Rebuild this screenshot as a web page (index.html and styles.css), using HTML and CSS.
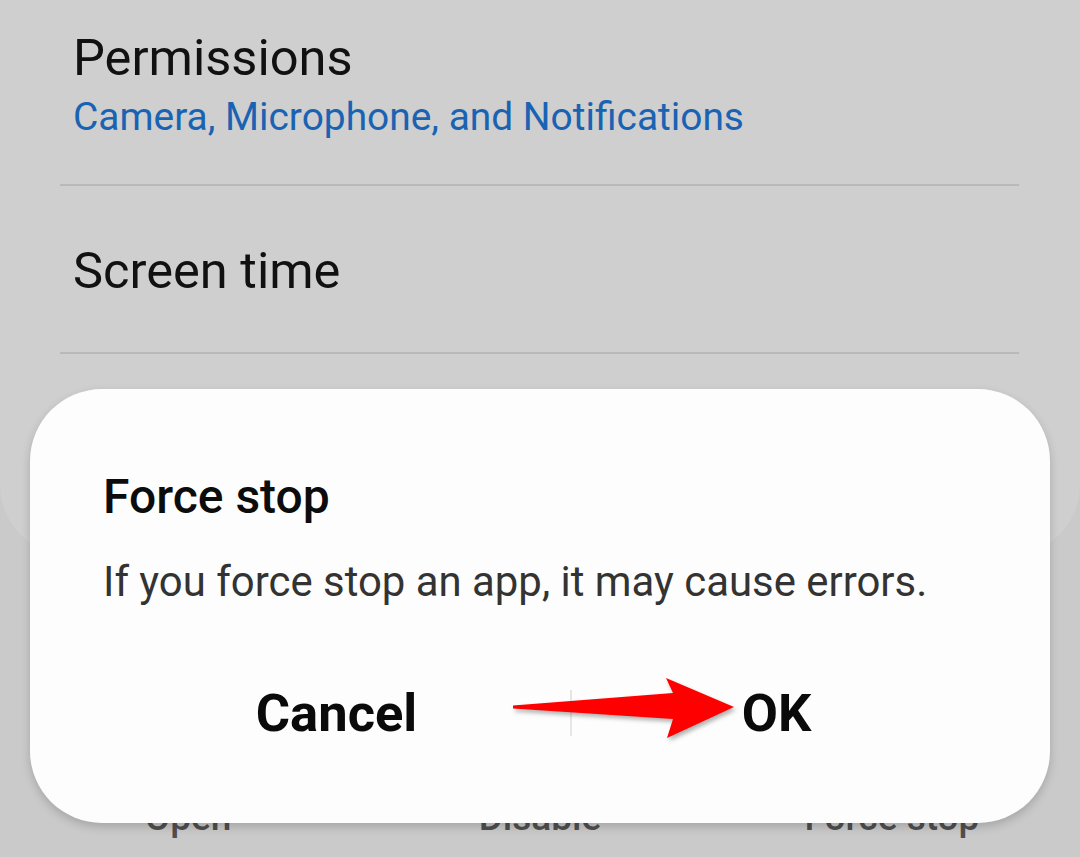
FILE: index.html
```html
<!DOCTYPE html>
<html>
<head>
<meta charset="utf-8">
<link rel="stylesheet" href="styles.css">
</head>
<body>
<div class="screen">
  <div class="card">
    <div class="item item-first">
      <div class="title">Permissions</div>
      <div class="summary">Camera, Microphone, and Notifications</div>
    </div>
    <div class="item item-second">
      <div class="title">Screen time</div>
    </div>
  </div>
  <div class="bar">
    <div class="bar-btn">Open</div>
    <div class="bar-btn">Disable</div>
    <div class="bar-btn">Force stop</div>
  </div>

  <div class="dialog">
    <div class="dlg-title">Force stop</div>
    <div class="dlg-msg">If you force stop an app, it may cause errors.</div>
    <div class="dlg-buttons">
      <div class="dlg-btn dlg-btn-left">Cancel</div>
      <div class="dlg-sep"></div>
      <div class="dlg-btn dlg-btn-right">OK</div>
    </div>
  </div>

  <svg class="arrow" viewBox="500 670 250 80" width="250" height="80">
    <polygon points="513,705.5 673,693 666,678 734,707 667,738 673,719 513,708.5" fill="#ff0000"/>
  </svg>
</div>
</body>
</html>
```

FILE: styles.css
```css
html, body {
  margin: 0;
  padding: 0;
}
body {
  background: #cacaca;
  font-family: Roboto, "Noto Sans", "Liberation Sans", sans-serif;
}
.screen {
  position: relative;
  width: 1080px;
  height: 857px;
  overflow: hidden;
  background: #cacaca;
}
.card {
  background: #cfcfcf;
  height: 555px;
  box-sizing: border-box;
  border-radius: 0 0 70px 70px;
  padding: 0 61px 0 60px;
}
.item {
  border-bottom: 2px solid #b9b9b9;
  padding-left: 13px;
}
.item-first {
  padding-top: 29px;
  padding-bottom: 44px;
}
.item-second {
  padding-top: 56px;
  padding-bottom: 52px;
}
.title {
  font-size: 50.6px;
  line-height: 58px;
  color: #111111;
}
.summary {
  margin-top: 7px;
  font-size: 38.9px;
  line-height: 46px;
  color: #1a63b3;
}
.bar {
  display: flex;
  padding: 0 12px;
  margin-top: 241px;
}
.bar-btn {
  flex: 1;
  text-align: center;
  font-size: 37px;
  line-height: 44px;
  font-weight: 500;
  color: #4f4f4f;
}
.dialog {
  position: absolute;
  left: 30px;
  top: 389px;
  width: 1020px;
  height: 434px;
  box-sizing: border-box;
  padding: 80px 69px 0 73px;
  background: #fdfdfd;
  border-radius: 72px;
  box-shadow: 0 4px 10px rgba(0, 0, 0, 0.18);
}
.dlg-title {
  font-size: 48px;
  line-height: 56px;
  font-weight: 500;
  color: #0c0c0c;
}
.dlg-msg {
  margin-top: 33px;
  font-size: 41.9px;
  line-height: 48px;
  color: #333333;
}
.dlg-buttons {
  margin-top: 78px;
  display: flex;
  align-items: center;
}
.dlg-btn {
  font-size: 52.5px;
  line-height: 58px;
  font-weight: 700;
  color: #0a0a0a;
  text-align: center;
}
.dlg-btn-left {
  width: 467px;
}
.dlg-btn-right {
  flex: 1;
}
.dlg-sep {
  width: 2px;
  height: 46px;
  background: #e6e6e6;
}
.arrow {
  position: absolute;
  left: 500px;
  top: 670px;
  filter: drop-shadow(2px 3px 2px rgba(0, 0, 0, 0.3));
}
```
